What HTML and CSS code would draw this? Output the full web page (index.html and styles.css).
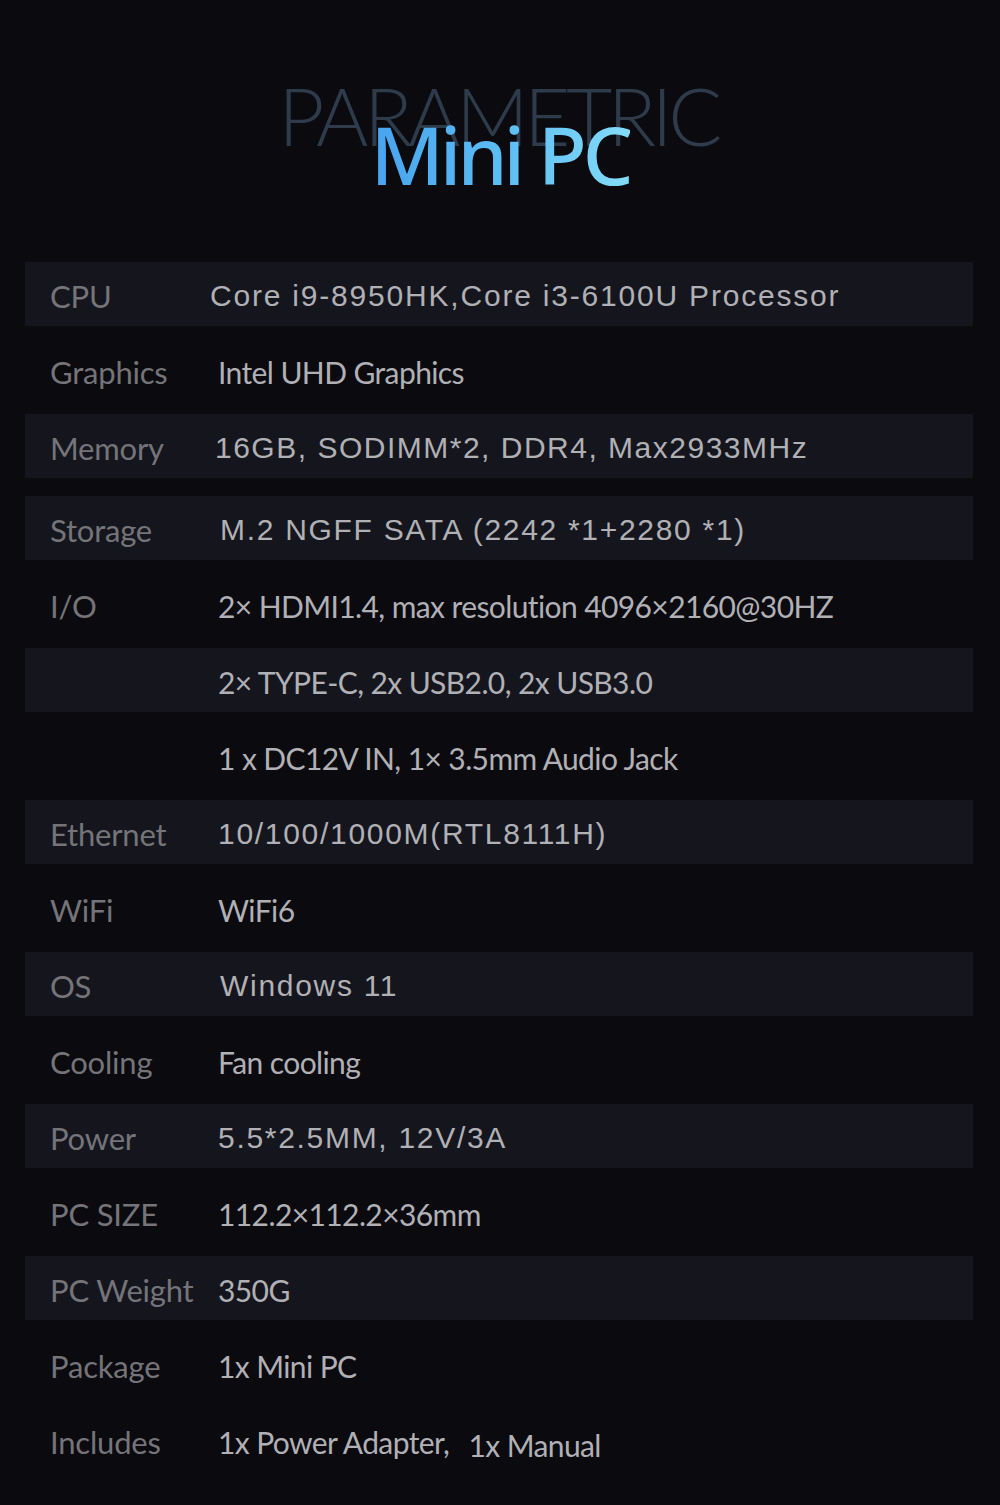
FILE: index.html
```html
<!DOCTYPE html>
<html lang="en">
<head>
<meta charset="utf-8">
<title>Mini PC Parametric</title>
<link rel="stylesheet" href="styles.css">
</head>
<body>
<main class="page">
  <header class="title">
    <div class="title-stack">
      <div class="bg-word">PARAMETRIC</div>
      <h1 class="main-word">Mini PC</h1>
    </div>
  </header>
  <section class="specs">
    <div class="row band"><span class="label">CPU</span><span class="value arial cpu">Core i9-8950HK,Core i3-6100U Processor</span></div>
    <div class="row"><span class="label">Graphics</span><span class="value">Intel UHD Graphics</span></div>
    <div class="row band"><span class="label">Memory</span><span class="value arial mem">16GB, SODIMM*2, DDR4, Max2933MHz</span></div>
    <div class="row band storage"><span class="label">Storage</span><span class="value arial sto">M.2 NGFF SATA (2242 *1+2280 *1)</span></div>
    <div class="row"><span class="label">I/O</span><span class="value">2× HDMI1.4, max resolution 4096×2160@30HZ</span></div>
    <div class="row band"><span class="label"></span><span class="value">2× TYPE-C, 2x USB2.0, 2x USB3.0</span></div>
    <div class="row"><span class="label"></span><span class="value">1 x DC12V IN, 1× 3.5mm Audio Jack</span></div>
    <div class="row band"><span class="label">Ethernet</span><span class="value arial">10/100/1000M(RTL8111H)</span></div>
    <div class="row"><span class="label">WiFi</span><span class="value">WiFi6</span></div>
    <div class="row band"><span class="label">OS</span><span class="value arial os">Windows 11</span></div>
    <div class="row"><span class="label">Cooling</span><span class="value">Fan cooling</span></div>
    <div class="row band"><span class="label">Power</span><span class="value arial">5.5*2.5MM, 12V/3A</span></div>
    <div class="row"><span class="label">PC SIZE</span><span class="value">112.2×112.2×36mm</span></div>
    <div class="row band"><span class="label">PC Weight</span><span class="value">350G</span></div>
    <div class="row"><span class="label">Package</span><span class="value">1x Mini PC</span></div>
    <div class="row"><span class="label">Includes</span><span class="value">1x Power Adapter, <span class="manual">1x Manual</span></span></div>
  </section>
</main>
</body>
</html>
```
FILE: styles.css
```css
html, body {
  margin: 0;
  padding: 0;
  background: #0a0a0f;
}

.page {
  width: 1000px;
  min-height: 1505px;
  background: #0a0a0f;
}

.title {
  box-sizing: border-box;
  height: 262px;
  padding-top: 75px;
  display: flex;
  justify-content: center;
}

.title-stack {
  display: grid;
  justify-items: center;
}

.bg-word {
  grid-area: 1 / 1;
  font-family: Lato, "Open Sans", sans-serif;
  font-weight: 300;
  font-size: 80px;
  line-height: 80px;
  color: #2e3b4b;
  letter-spacing: -4.5px;
  margin-left: -4px;
}

.main-word {
  grid-area: 1 / 1;
  margin: 39px 0 0 0;
  font-family: "Noto Sans", sans-serif;
  font-weight: 500;
  font-size: 80px;
  line-height: 80px;
  letter-spacing: -4px;
  background: linear-gradient(90deg, #47a3ee 0%, #5cbcf4 50%, #84dcf8 100%);
  -webkit-background-clip: text;
  background-clip: text;
  color: transparent;
}

.specs {
  margin: 0 27px 0 25px;
  display: flex;
  flex-direction: column;
  gap: 12px;
}

.row {
  height: 64px;
  display: flex;
  align-items: center;
  box-sizing: border-box;
  padding-top: 4px;
}

.row.band {
  background: #15161d;
}

.row.storage {
  margin-top: 6px;
}

.label {
  width: 193px;
  flex: none;
  box-sizing: border-box;
  padding-left: 25px;
  font-family: Lato, "Noto Sans", sans-serif;
  font-size: 31px;
  letter-spacing: -0.2px;
  color: #747479;
  white-space: nowrap;
}

.value {
  font-family: Lato, "Noto Sans", sans-serif;
  font-size: 30px;
  letter-spacing: -0.6px;
  color: #b0b0b5;
  white-space: nowrap;
}

.value.arial {
  font-family: "Liberation Sans", Arial, sans-serif;
  font-size: 30px;
  letter-spacing: 1.7px;
}

.value.cpu { margin-left: -8px; letter-spacing: 1.8px; }
.value.mem { margin-left: -3px; letter-spacing: 1.5px; }
.value.sto { margin-left: 2px; }
.value.os { margin-left: 2px; }

.manual {
  display: inline-block;
  margin-left: 12px;
  transform: translateY(3px);
}
```
